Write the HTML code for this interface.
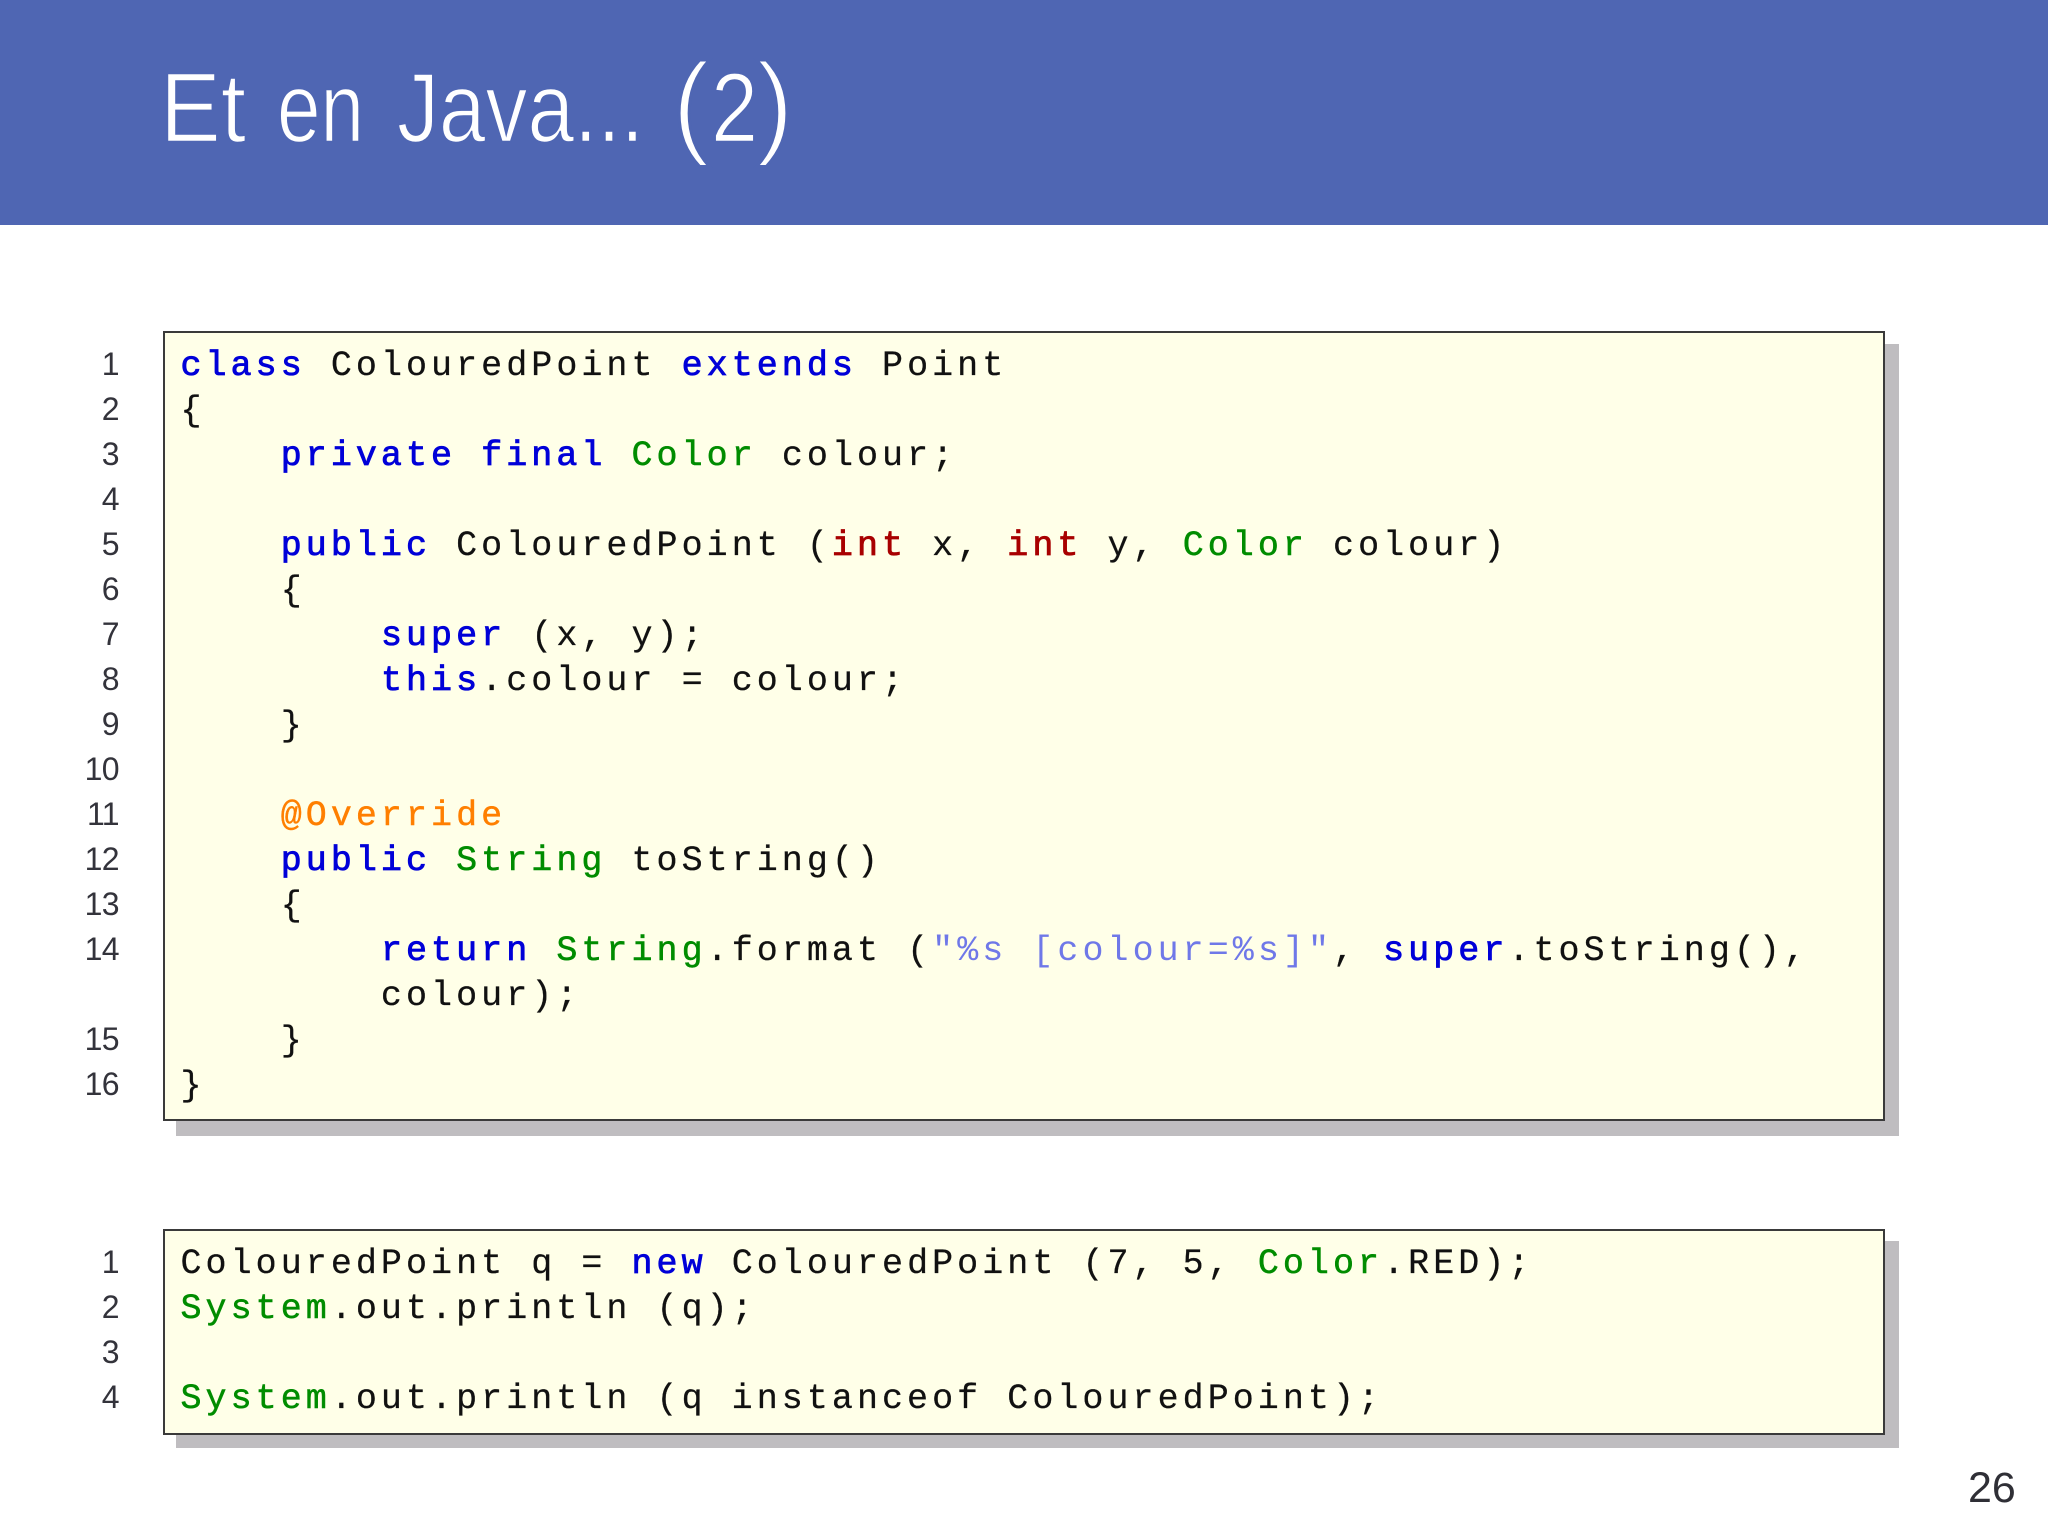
<!DOCTYPE html>
<html lang="fr">
<head>
<meta charset="utf-8">
<title>Et en Java... (2)</title>
<style>
html,body{margin:0;padding:0;width:2048px;height:1536px;overflow:hidden;background:#fff}
.head{position:absolute;left:0;top:0;width:2048px;height:225px;background:#4f66b3}
.title{position:absolute;left:0;top:0}
.shadow{position:absolute;background:#bfbdc0}
.box{position:absolute;box-sizing:border-box;background:#ffffe8;border:2px solid #3a3a3a}
pre{position:absolute;margin:0;font-family:"Liberation Mono",monospace;font-size:35px;line-height:45px;letter-spacing:4.05px;color:#111;-webkit-text-stroke:.25px #111}
.nums{position:absolute;left:60px;width:59px;text-align:right;font-family:"Liberation Sans",sans-serif;font-size:32px;line-height:45px;color:#33333b;letter-spacing:-.6px}
.k{color:#0000d8;-webkit-text-stroke:.8px #0000d8}
.t{color:#008c00;-webkit-text-stroke:.5px #008c00}
.r{color:#a80000;-webkit-text-stroke:.8px #a80000}
.o{color:#ff7f00;-webkit-text-stroke:.4px #ff7f00}
.s{color:#6f78e8;-webkit-text-stroke:0}
.pg{position:absolute;left:1968px;top:1464px;font-family:"Liberation Sans",sans-serif;font-size:43px;line-height:48px;color:#2f2f36}
</style>
</head>
<body>
<div class="head"></div>
<svg class="title" width="2048" height="225" xmlns="http://www.w3.org/2000/svg">
<g font-family="Liberation Sans, sans-serif" font-size="98" fill="#fff" stroke="#4f66b3" stroke-width="1.6">
<text x="160" y="141.5" textLength="86" lengthAdjust="spacingAndGlyphs">Et</text>
<text x="277" y="141.5" textLength="87" lengthAdjust="spacingAndGlyphs">en</text>
<text x="397" y="141.5" textLength="247" lengthAdjust="spacingAndGlyphs">Java...</text>
<text x="672" y="143" font-size="114" stroke-width="3">(</text>
<text x="711" y="141.5" textLength="47" lengthAdjust="spacingAndGlyphs">2</text>
<text x="756" y="143" font-size="114" stroke-width="3">)</text>
</g>
</svg>

<div class="shadow" style="left:176px;top:344px;width:1723px;height:792px"></div>
<div class="box" style="left:163px;top:331px;width:1722px;height:790px"></div>
<div class="nums" style="top:341.5px">1<br>2<br>3<br>4<br>5<br>6<br>7<br>8<br>9<br>10<br>11<br>12<br>13<br>14<br><br>15<br>16</div>
<pre style="left:180.5px;top:344px"><span class="k">class</span> ColouredPoint <span class="k">extends</span> Point
{
    <span class="k">private</span> <span class="k">final</span> <span class="t">Color</span> colour;

    <span class="k">public</span> ColouredPoint (<span class="r">int</span> x, <span class="r">int</span> y, <span class="t">Color</span> colour)
    {
        <span class="k">super</span> (x, y);
        <span class="k">this</span>.colour = colour;
    }

    <span class="o">@Override</span>
    <span class="k">public</span> <span class="t">String</span> toString()
    {
        <span class="k">return</span> <span class="t">String</span>.format (<span class="s">"%s [colour=%s]"</span>, <span class="k">super</span>.toString(),
        colour);
    }
}</pre>

<div class="shadow" style="left:176px;top:1241px;width:1723px;height:207px"></div>
<div class="box" style="left:163px;top:1229px;width:1722px;height:206px"></div>
<div class="nums" style="top:1240px">1<br>2<br>3<br>4</div>
<pre style="left:180.5px;top:1241.5px">ColouredPoint q = <span class="k">new</span> ColouredPoint (7, 5, <span class="t">Color</span>.RED);
<span class="t">System</span>.out.println (q);

<span class="t">System</span>.out.println (q instanceof ColouredPoint);</pre>

<div class="pg">26</div>
</body>
</html>
